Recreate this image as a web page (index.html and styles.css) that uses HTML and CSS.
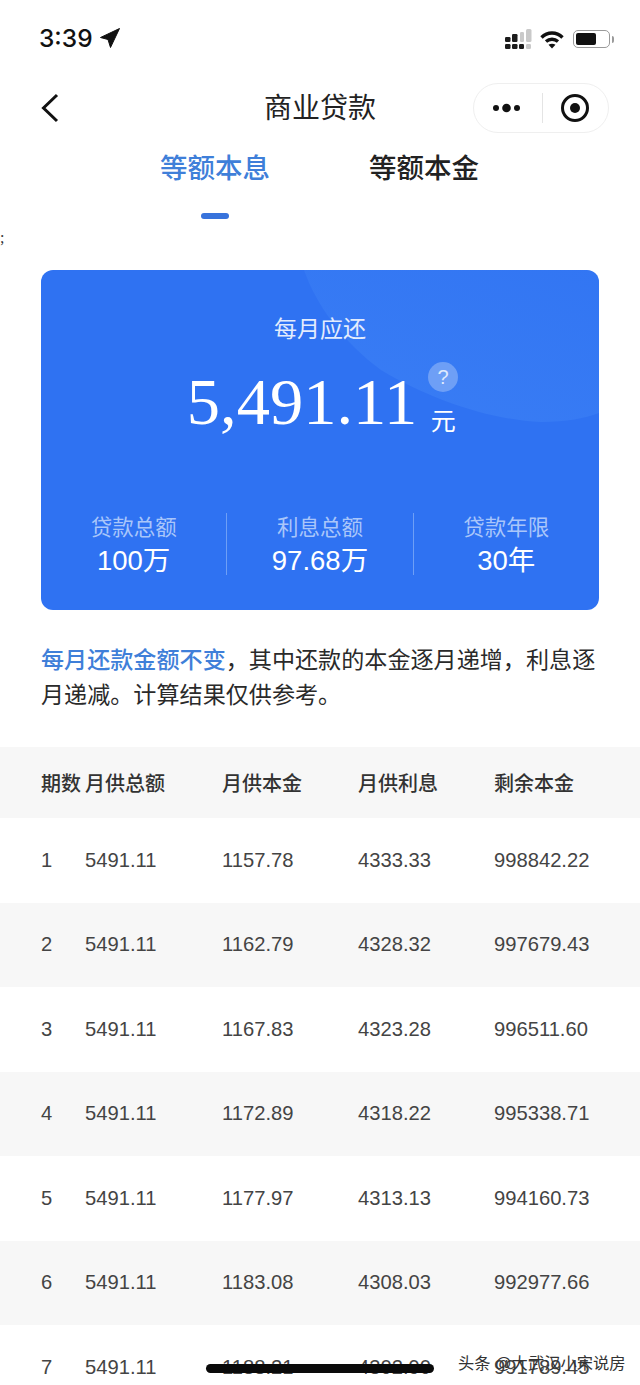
FILE: index.html
```html
<!DOCTYPE html>
<html lang="zh">
<head>
<meta charset="utf-8">
<title>商业贷款</title>
<link rel="stylesheet" href="styles.css">
</head>
<body>
<div class="page">
  <div class="status">
    <div class="clock"><span>3:39</span>
      <svg class="loc" width="20" height="20" viewBox="0 0 20 20"><path d="M19.5 0.5 L0.5 9.500 L8 11.500 L10.500 19.500 Z" fill="#111" stroke="#111" stroke-linejoin="round"/></svg>
    </div>
    <div class="status-icons">
      <svg width="27" height="21" viewBox="0 0 27 21">
        <g fill="#c9c9c9">
          <rect x="21" y="0" width="5.500" height="13" rx="1.500"/>
          <rect x="15" y="3" width="4" height="10" rx="1.200"/>
          <rect x="21" y="15" width="5" height="5" rx="1.200"/>
        </g>
        <g fill="#1c1c1c">
          <rect x="0" y="8" width="5.500" height="5" rx="1.200"/><rect x="0" y="15" width="5.500" height="5" rx="1.200"/>
          <rect x="7" y="5" width="5.500" height="8" rx="1.200"/><rect x="7" y="15" width="5.500" height="5" rx="1.200"/>
          <rect x="14" y="15" width="5" height="5" rx="1.200"/>
        </g>
      </svg>
      <svg width="24" height="19" viewBox="0 0 24 19" fill="none" stroke="#111" stroke-width="3.400">
        <path d="M1.500 7.500 C7.500 1.500 16.500 1.500 22.500 7.500"/>
        <path d="M6 11.500 C9.500 8.500 14.500 8.500 18 11.500"/>
        <path d="M12 18.500 L8.500 14.800 C10.500 13.300 13.500 13.300 15.500 14.800 Z" fill="#111" stroke="none"/>
      </svg>
      <div class="battery"><div class="battery-fill"></div></div>
      <div class="battery-cap"></div>
    </div>
  </div>
  <div class="nav">
    <svg class="back" width="20" height="30" viewBox="0 0 20 30" fill="none"><path d="M17 2 L3.500 15 L17 28" stroke="#111" stroke-width="3"/></svg>
    <div class="title">商业贷款</div>
    <div class="capsule">
      <svg width="30" height="12" viewBox="0 0 30 12"><circle cx="4" cy="6" r="3" fill="#111"/><circle cx="14.500" cy="6" r="4.300" fill="#111"/><circle cx="25" cy="6" r="3" fill="#111"/></svg>
      <i class="capsule-line"></i>
      <svg width="30" height="30" viewBox="0 0 30 30"><circle cx="15" cy="15" r="12.500" fill="none" stroke="#111" stroke-width="3"/><circle cx="15" cy="15" r="5" fill="#111"/></svg>
    </div>
  </div>
  <div class="tabs">
    <div class="tab tab-on">等额本息<i class="tab-bar"></i></div>
    <div class="tab">等额本金</div>
  </div>
  <div class="stray">;</div>
  <div class="card">
    <svg class="wave" width="558" height="340" viewBox="0 0 558 340">
      <defs><linearGradient id="waveFill" x1="1" y1="0" x2="0.3" y2="1"><stop offset="0" stop-color="#3c80f5" stop-opacity="0.25"/><stop offset="1" stop-color="#3c80f5" stop-opacity="0.75"/></linearGradient></defs>
      <path d="M263 0 C275 35 303 73 340 100 C390 130 450 150 500 152 C525 152 545 148 558 143 L558 0 Z" fill="url(#waveFill)"/>
    </svg>
    <div class="due-label">每月应还</div>
    <div class="due">
      <span class="amount">5,491.11</span>
      <div class="unit-col"><span class="help">?</span><span class="unit">元</span></div>
    </div>
    <div class="stats">
      <div class="stat"><div class="stat-label">贷款总额</div><div class="stat-value">100万</div></div>
      <div class="stat"><div class="stat-label">利息总额</div><div class="stat-value">97.68万</div></div>
      <div class="stat"><div class="stat-label">贷款年限</div><div class="stat-value">30年</div></div>
    </div>
  </div>
  <p class="note"><span class="note-key">每月还款金额不变</span>，其中还款的本金逐月递增，利息逐月递减。计算结果仅供参考。</p>
  <div class="table">
    <div class="row head"><span>期数</span><span>月供总额</span><span>月供本金</span><span>月供利息</span><span>剩余本金</span></div>
    <div class="row"><span>1</span><span>5491.11</span><span>1157.78</span><span>4333.33</span><span>998842.22</span></div>
    <div class="row alt"><span>2</span><span>5491.11</span><span>1162.79</span><span>4328.32</span><span>997679.43</span></div>
    <div class="row"><span>3</span><span>5491.11</span><span>1167.83</span><span>4323.28</span><span>996511.60</span></div>
    <div class="row alt"><span>4</span><span>5491.11</span><span>1172.89</span><span>4318.22</span><span>995338.71</span></div>
    <div class="row"><span>5</span><span>5491.11</span><span>1177.97</span><span>4313.13</span><span>994160.73</span></div>
    <div class="row alt"><span>6</span><span>5491.11</span><span>1183.08</span><span>4308.03</span><span>992977.66</span></div>
    <div class="row"><span>7</span><span>5491.11</span><span>1188.21</span><span>4302.90</span><span>991789.45</span></div>
  </div>
  <div class="home-bar"></div>
  <div class="watermark">头条 @大武汉小宋说房</div>
</div>
</body>
</html>
```
FILE: styles.css
```css
* { box-sizing: border-box; }
html, body { margin: 0; padding: 0; background: #fff; }
.page {
  position: relative;
  width: 640px;
  height: 1385px;
  overflow: hidden;
  font-family: "Liberation Sans", "Noto Sans CJK SC", sans-serif;
  color: #222;
  background: #fff;
}
.status {
  height: 76px;
  padding: 20px 26px 0 39px;
  display: flex;
  justify-content: space-between;
  align-items: flex-start;
}
.clock {
  display: flex;
  align-items: center;
  gap: 7px;
  height: 36px;
  font-size: 24.500px;
  font-weight: 500;
  font-family: Inter, "Liberation Sans", sans-serif;
  color: #111;
}
.status-icons { display: flex; align-items: center; gap: 8px; height: 38px; }
.battery {
  width: 37px;
  height: 18px;
  border: 1.500px solid #9a9a9a;
  border-radius: 5px;
  padding: 2px;
  margin-left: 1px;
}
.battery-fill { width: 20px; height: 100%; background: #111; border-radius: 2px; }
.battery-cap { width: 2px; height: 7px; margin-left: -6px; background: #9a9a9a; border-radius: 0 2px 2px 0; }
.nav {
  position: relative;
  height: 62px;
  display: flex;
  align-items: center;
  justify-content: center;
  margin-top: 1px;
}
.back { position: absolute; left: 40px; top: 16px; }
.title { font-size: 28px; line-height: 36px; margin-top: 1px; color: #222; }
.capsule {
  position: absolute;
  right: 31px;
  top: 6px;
  width: 136px;
  height: 50px;
  border: 1px solid #efefef;
  border-radius: 25px;
  display: flex;
  align-items: center;
  justify-content: space-between;
  padding: 0 18px 0 18px;
}
.capsule-line { width: 1px; height: 30px; background: #e4e4e4; margin-left: 2px; }
.tabs {
  display: flex;
  height: 91px;
  padding-left: 160px;
  gap: 99px;
}
.tab {
  position: relative;
  font-size: 27.500px;
  font-weight: 500;
  line-height: 38px;
  height: 38px;
  margin-top: 11px;
}
.tab-on { color: #3f7fd9; }
.tab-bar {
  position: absolute;
  left: 41px;
  top: 63px;
  width: 28px;
  height: 6px;
  border-radius: 3px;
  background: #3873dc;
}
.stray {
  position: absolute;
  left: 0;
  top: 228px;
  font: 16px/20px "Liberation Serif", serif;
  color: #333;
}
.card {
  position: relative;
  overflow: hidden;
  margin: 40px 41px 0;
  height: 340px;
  border-radius: 12px;
  background: #2f72f2;
  color: #fff;
  display: flex;
  flex-direction: column;
  align-items: center;
}
.wave { position: absolute; left: 0; top: 0; }
.due-label, .due { position: relative; }
.due-label { margin-top: 44px; font-size: 23px; line-height: 30px; color: #e3ecfd; }
.due { display: flex; margin-top: 23px; margin-left: 5px; height: 70px; }
.amount { font: 66.500px/70px "Liberation Serif", serif; color: #fff; }
.unit-col { display: flex; flex-direction: column; align-items: center; margin-left: 11px; width: 30px; }
.help {
  width: 30px;
  height: 30px;
  margin-top: -5px;
  border-radius: 50%;
  background: #6e9ff6;
  font-size: 20px;
  line-height: 30px;
  text-align: center;
  color: #dfeafd;
}
.unit { font-size: 25px; line-height: 30px; margin-top: 14px; }
.stats { position: absolute; left: 0; right: 0; top: 243px; display: flex; height: 62px; }
.stat { flex: 1; text-align: center; border-left: 1px solid #6e9ff6; }
.stat:first-child { border-left: 0; }
.stat-label { font-size: 21.500px; line-height: 30px; color: #a9c6fa; }
.stat-value { font-size: 27.500px; line-height: 36px; }
.note {
  margin: 33px 39px 0 41px;
  font-size: 23.100px;
  line-height: 35px;
  color: #2a2a2a;
}
.note-key { color: #3f7fd9; font-weight: 500; }
.table { margin-top: 34px; }
.row {
  display: grid;
  grid-template-columns: 44px 137px 136px 136px 1fr;
  align-items: center;
  height: 84.500px;
  padding-left: 41px;
  font-size: 20.200px;
  color: #444;
}
.row.head { height: 71px; font-size: 20px; background: #f7f7f7; font-weight: 500; color: #333; }
.row.alt { background: #f7f7f7; }
.home-bar {
  position: absolute;
  left: 206px;
  top: 1364px;
  width: 228px;
  height: 9px;
  border-radius: 5px;
  background: #0a0a0a;
}
.watermark {
  position: absolute;
  left: 458px;
  top: 1351px;
  font-size: 16.300px;
  line-height: 24px;
  color: #333;
}
```
